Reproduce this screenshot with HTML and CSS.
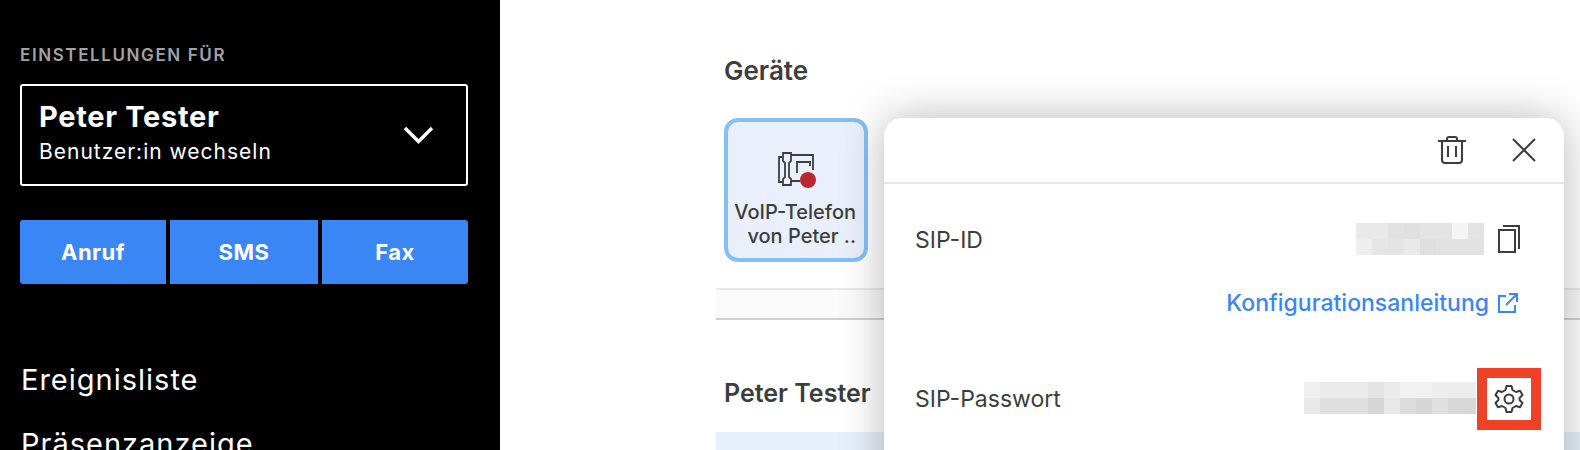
FILE: index.html
```html
<!DOCTYPE html>
<html lang="de">
<head>
    <meta charset="UTF-8">
    <title>Geräte</title>
    <link rel="stylesheet" href="styles.css">
</head>
<body>
    <section class="app">
        <aside class="side">
            <div class="side-label">EINSTELLUNGEN FÜR</div>
            <div class="user-box">
                <div>
                    <div class="user-name">Peter Tester</div>
                    <div class="user-sub">Benutzer:in wechseln</div>
                </div>
                <svg class="chevron" width="30" height="18" viewBox="0 0 30 18"><path d="M1 2 L14.5 15.5 L28 2" fill="none" stroke="#fff" stroke-width="3.4"/></svg>
            </div>
            <div class="side-btns">
                <a class="side-btn" href="javascript:;">Anruf</a>
                <a class="side-btn" href="javascript:;">SMS</a>
                <a class="side-btn" href="javascript:;">Fax</a>
            </div>
            <nav class="side-nav">
                <a href="javascript:;">Ereignisliste</a>
                <a href="javascript:;">Präsenzanzeige</a>
            </nav>
        </aside>
        <main class="main">
            <h2 class="title title-devices">Geräte</h2>
            <div class="device">
                <svg width="40" height="38" viewBox="0 0 40 38" fill="none" stroke="#3d3d3d" stroke-width="1.8">
                    <path d="M6 7 H3 V32 H6"/>
                    <path d="M7 3 H15 V11 L13 13 V27 L15 29 V35 H7 V29 L9 27 V13 L7 11 Z"/>
                    <path d="M15 5 H37 V20 M15 31 H24"/>
                    <path d="M21 23 V12 H34 V16"/>
                </svg>
                <span class="device-dot"></span>
                <div class="device-name">VoIP-Telefon<br>von Peter ..</div>
            </div>
            <div class="strip"></div>
            <h2 class="title title-user">Peter Tester</h2>
            <div class="tinted"></div>
        </main>

        <div class="panel">
            <div class="panel-top">
                <svg width="28" height="28" viewBox="0 0 28 28" fill="none" stroke="#3d3d3d" stroke-width="2"><path d="M0 5 H28 M9 5 V3 Q9 1 11 1 H17 Q19 1 19 3 V5 M4 5 V24 Q4 27 7 27 H21 Q24 27 24 24 V5 M10 10 V21 M18 10 V21"/></svg>
                <svg width="24" height="24" viewBox="0 0 24 24" fill="none" stroke="#3d3d3d" stroke-width="2"><path d="M1 1 L23 23 M23 1 L1 23"/></svg>
            </div>
            <div class="row row-id">
                <span class="row-label">SIP-ID</span>
                <div class="row-right">
                    <div class="blur blur-id"></div>
                    <svg width="22" height="28" viewBox="0 0 22 28" fill="none" stroke="#3d3d3d" stroke-width="2"><rect x="1" y="5" width="16" height="22"/><path d="M5 1 H21 V24"/></svg>
                </div>
            </div>
            <div class="link-row">
                <a class="link" href="javascript:;">Konfigurationsanleitung</a>
                <svg width="20" height="20" viewBox="0 0 20 20" fill="none" stroke="#3b86f5" stroke-width="2"><path d="M8 3 H1 V19 H17 V12 M11 1 H19 V9 M19 1 L8 12"/></svg>
            </div>
            <div class="row row-pw">
                <span class="row-label">SIP-Passwort</span>
                <div class="row-right">
                    <div class="blur blur-pw"></div>
                    <div class="gear-box">
                        <svg width="30" height="30" viewBox="0 0 30 30" fill="none" stroke="#3d3d3d" stroke-width="2" stroke-linejoin="round"><circle cx="15" cy="15" r="4.5"/><path d="M12.5 2 H17.5 L18.5 6 L22 8 L26 6.8 L28.5 11 L25.6 14 V16 L28.5 19 L26 23.2 L22 22 L18.5 24 L17.5 28 H12.5 L11.5 24 L8 22 L4 23.2 L1.5 19 L4.4 16 V14 L1.5 11 L4 6.8 L8 8 L11.5 6 Z"/></svg>
                    </div>
                </div>
            </div>
        </div>
    </section>
</body>
</html>
```

FILE: styles.css
```css
*{
    margin: 0;
    padding: 0;
    box-sizing: border-box;
}
html,body{
    width: 1580px;
    height: 450px;
    overflow: hidden;
    background: #fff;
}
.app{
    display: flex;
    height: 450px;
    position: relative;
    overflow: hidden;
}
.side{
    width: 500px;
    height: 450px;
    flex: none;
    background: #000;
    color: #fff;
    padding: 46px 32px 0 20px;
    font-family: Inter, "Liberation Sans", sans-serif;
    overflow: hidden;
}
.side-label{
    color: #a3a3a3;
    font-size: 17px;
    font-weight: 600;
    letter-spacing: 1.6px;
    line-height: 18px;
    margin-bottom: 20px;
}
.user-box{
    height: 102px;
    border: 2px solid #fff;
    border-radius: 3px;
    padding: 14px 16px 0 17px;
    display: flex;
    justify-content: space-between;
}
.user-name{
    font-size: 29px;
    font-weight: 700;
    line-height: 34px;
    letter-spacing: .7px;
}
.user-sub{
    font-size: 21px;
    line-height: 34px;
    letter-spacing: 1px;
    margin-top: 1px;
}
.chevron{
    margin: 26px 16px 0 0;
}
.side-btns{
    display: grid;
    grid-template-columns: 146px 148px 146px;
    gap: 4px;
    margin-top: 34px;
}
.side-btn{
    height: 64px;
    background: #3b86f5;
    color: #fff;
    text-decoration: none;
    font-size: 22px;
    font-weight: 700;
    letter-spacing: .5px;
    display: flex;
    align-items: center;
    justify-content: center;
}
.side-btn:first-child{
    border-radius: 3px 0 0 3px;
}
.side-btn:last-child{
    border-radius: 0 3px 3px 0;
}
.side-nav{
    margin-top: 64px;
}
.side-nav a{
    display: block;
    color: #fff;
    text-decoration: none;
    font-size: 29px;
    line-height: 64px;
    letter-spacing: 1px;
    padding-left: 1px;
}
.main{
    flex: 1;
    padding: 51px 0 0 216px;
    font-family: Inter, "Liberation Sans", sans-serif;
    color: #3d3d3d;
}
.title{
    font-size: 25px;
    font-weight: 600;
    line-height: 40px;
    margin-left: 8px;
}
.title-devices{
    font-size: 26px;
}
.device{
    width: 144px;
    height: 144px;
    margin: 27px 0 0 8px;
    background: #e9f0fc;
    border: 4px solid #85bff7;
    border-radius: 14px;
    position: relative;
    padding: 28px 8px 0 0;
}
.device svg{
    display: block;
    margin-left: 48px;
}
.device-dot{
    position: absolute;
    left: 72px;
    top: 50px;
    width: 16px;
    height: 16px;
    border-radius: 50%;
    background: #b92832;
}
.device-name{
    font-size: 20px;
    font-weight: 500;
    line-height: 24px;
    margin-top: 12px;
    white-space: nowrap;
    text-align: right;
}
.strip{
    height: 32px;
    margin-top: 26px;
    background: #fafafa;
    border-top: 2px solid #e8e8e8;
    border-bottom: 2px solid #cfcfcf;
}
.title-user{
    margin-top: 53px;
}
.tinted{
    height: 40px;
    margin-top: 19px;
    background: #e6f0fa;
}
.panel{
    position: absolute;
    left: 884px;
    top: 118px;
    width: 680px;
    height: 400px;
    background: #fff;
    border-radius: 18px 18px 0 0;
    box-shadow: 0 0 44px rgba(0,0,0,.28);
    font-family: Inter, "Liberation Sans", sans-serif;
    color: #3d3d3d;
}
.panel-top{
    height: 66px;
    border-bottom: 2px solid #e8e8e8;
    display: flex;
    align-items: center;
    justify-content: flex-end;
    gap: 46px;
    padding-right: 28px;
}
.row{
    display: flex;
    justify-content: space-between;
    align-items: center;
    padding: 0 44px 0 31px;
    height: 32px;
}
.row-id{
    margin-top: 39px;
}
.row-pw{
    margin-top: 63px;
}
.row-label{
    font-size: 23px;
    padding-top: 2px;
}
.row-right{
    display: flex;
    align-items: center;
    gap: 14px;
}
.row-pw .row-right{
    gap: 1px;
}
.blur{
    height: 32px;
}
.blur-id{
    width: 128px;
    background:
        linear-gradient(90deg,#e9e9e9 0 32px,#e2e2e2 32px 48px,#e0e0e0 48px 64px,#e4e4e4 64px 96px,#f4f4f4 96px 112px,#e4e4e4 112px) top/100% 16px no-repeat,
        linear-gradient(90deg,#eeeeee 0 16px,#e6e6e6 16px 32px,#e4e4e4 32px 48px,#e9e9e9 48px 64px,#dfdfdf 64px 80px,#e2e2e2 80px) bottom/100% 16px no-repeat;
}
.blur-pw{
    width: 172px;
    background:
        linear-gradient(90deg,#efefef 0 16px,#ebebeb 16px 64px,#e4e4e4 64px 80px,#ebebeb 80px 96px,#f1f1f1 96px 128px,#ededed 128px) top/100% 16px no-repeat,
        linear-gradient(90deg,#e8e8e8 0 16px,#dfdfdf 16px 64px,#d6d6d6 64px 80px,#e8e8e8 80px 96px,#dcdcdc 96px 112px,#d6d6d6 112px 128px,#e0e0e0 128px 144px,#d8d8d8 144px) bottom/100% 16px no-repeat;
}
.gear-box{
    width: 64px;
    height: 62px;
    border: 10px solid #ef4126;
    background: #fff;
    display: flex;
    align-items: center;
    justify-content: center;
    margin: 2px -21px 0 0;
    position: relative;
    flex: none;
}
.link-row{
    display: flex;
    justify-content: flex-end;
    align-items: center;
    gap: 9px;
    padding-right: 46px;
    margin-top: 32px;
    height: 32px;
}
.link{
    color: #3b86f5;
    text-decoration: none;
    font-size: 23px;
    font-weight: 500;
}
```
